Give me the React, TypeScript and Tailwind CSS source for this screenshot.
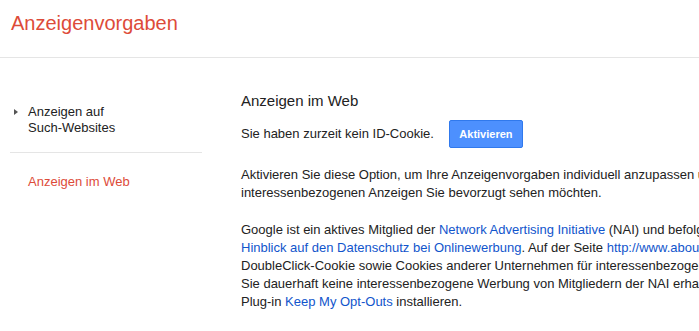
import React from "react";

export default function App() {
  return (
    <div className="w-[699px] h-[331px] overflow-hidden bg-white font-['Arial','Liberation_Sans',sans-serif] text-[13px] text-[#222]">
      <header className="h-[58px] border-b border-[#e5e5e5] pl-[11px] pt-[11px]">
        <h1 className="text-[20px] leading-[24px] text-[#dd4b39]">Anzeigenvorgaben</h1>
      </header>
      <div className="flex">
        <nav className="w-[202px] shrink-0 pl-[10px] pt-[46px]">
          <div className="relative pl-[18px] leading-[16px] text-[#222]">
            <span className="absolute left-[4px] top-[5px] h-0 w-0 border-y-[3.5px] border-l-[4px] border-y-transparent border-l-[#555]"></span>
            Anzeigen auf
            <br />
            Such-Websites
          </div>
          <div className="mt-[16px] h-px bg-[#e5e5e5]"></div>
          <div className="mt-[21px] pl-[18px] leading-[16px] text-[#dd4b39]">Anzeigen im Web</div>
        </nav>
        <main className="ml-[39px] pt-[33px] whitespace-nowrap">
          <h2 className="text-[15px] leading-[20px] text-[#222]">Anzeigen im Web</h2>
          <div className="mt-[9px] flex items-center">
            <span className="leading-[18px]">Sie haben zurzeit kein ID-Cookie.</span>
            <button className="ml-[15px] h-[28px] w-[74px] rounded-[2px] border border-[#3079ed] bg-[#4d90fe] text-[11px] font-bold text-white">
              Aktivieren
            </button>
          </div>
          <p className="mt-[18px] leading-[18px]">
            Aktivieren Sie diese Option, um Ihre Anzeigenvorgaben individuell anzupassen und festzulegen, welche Kategorien von
            <br />
            interessenbezogenen Anzeigen Sie bevorzugt sehen möchten.
          </p>
          <p className="mt-[19px] leading-[18px]">
            Google ist ein aktives Mitglied der <a className="text-[#15c]">Network Advertising Initiative</a> (NAI) und befolgt deren Grundsätze im
            <br />
            <a className="text-[#15c]">Hinblick auf den Datenschutz bei Onlinewerbung</a>. Auf der Seite <a className="text-[#15c]">http://www.aboutads.info/choices</a> können Sie das
            <br />
            DoubleClick-Cookie sowie Cookies anderer Unternehmen für interessenbezogene Werbung deaktivieren. Wenn
            <br />
            Sie dauerhaft keine interessenbezogene Werbung von Mitgliedern der NAI erhalten möchten, können Sie das Browser-
            <br />
            Plug-in <a className="text-[#15c]">Keep My Opt-Outs</a> installieren.
          </p>
        </main>
      </div>
    </div>
  );
}
